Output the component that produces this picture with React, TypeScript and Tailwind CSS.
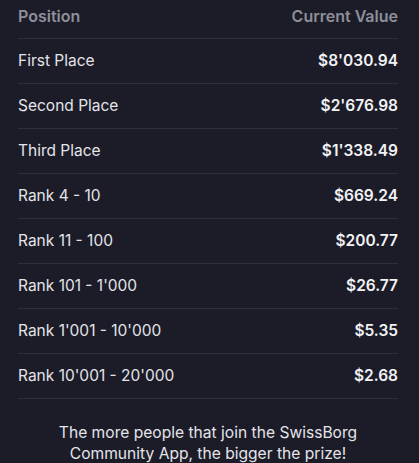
import React from 'react';

const prizes = [
  { position: 'First Place', value: "$8'030.94" },
  { position: 'Second Place', value: "$2'676.98" },
  { position: 'Third Place', value: "$1'338.49" },
  { position: 'Rank 4 - 10', value: '$669.24' },
  { position: 'Rank 11 - 100', value: '$200.77' },
  { position: "Rank 101 - 1'000", value: '$26.77' },
  { position: "Rank 1'001 - 10'000", value: '$5.35' },
  { position: "Rank 10'001 - 20'000", value: '$2.68' },
];

const App = () => {
  return (
    <div className="min-h-[463px] w-full bg-[#1b1c27] font-['Inter',sans-serif] text-[#e9e9ee]">
      <div className="pl-[18px] pr-[21px]">
        <div className="flex items-center justify-between pt-[6px] pb-3 text-[16px] font-semibold leading-5 text-[#8d8f9a]">
          <span>Position</span>
          <span>Current Value</span>
        </div>

        {prizes.map((p) => (
          <div
            key={p.position}
            className="flex h-[45px] items-center justify-between border-t border-[#2c2e3b] text-[15.5px]"
          >
            <span className="text-[#e4e4ea]">{p.position}</span>
            <span className="font-semibold text-[#f2f2f5]">{p.value}</span>
          </div>
        ))}

        <div className="border-t border-[#2c2e3b] pt-[23px] text-center text-[15.6px] leading-[21px] text-[#e4e4ea]">
          The more people that join the SwissBorg
          <br />
          Community App, the bigger the prize!
        </div>
      </div>
    </div>
  );
};

export default App;
